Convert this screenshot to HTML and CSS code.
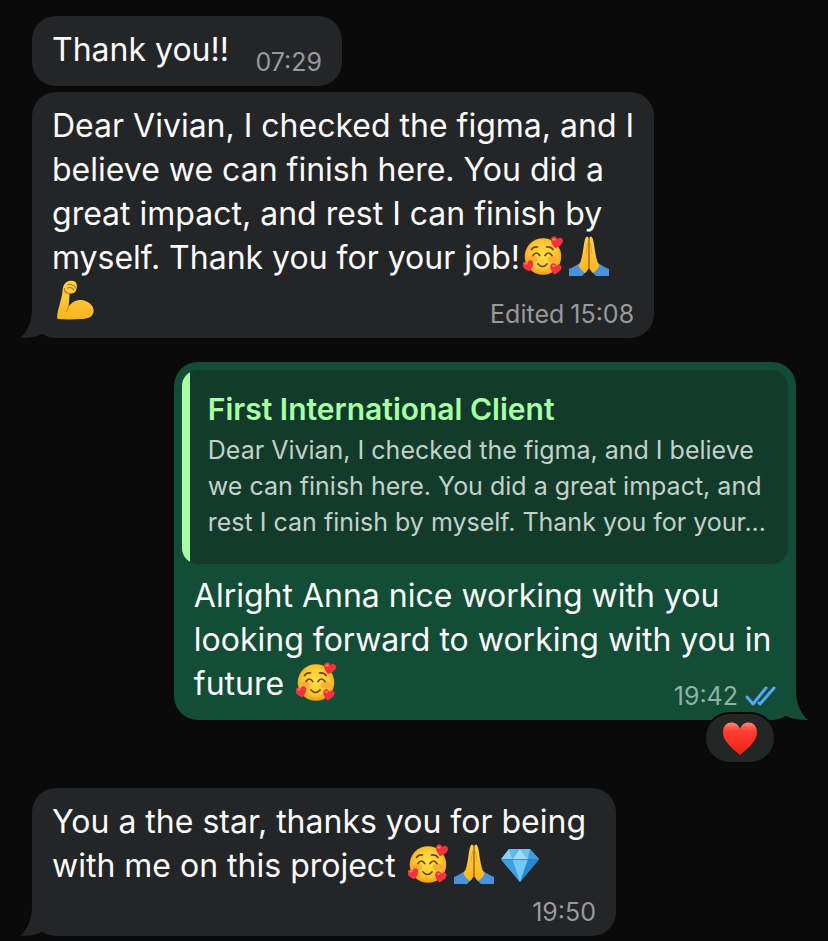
FILE: index.html
```html
<!DOCTYPE html>
<html lang="en">
<head>
    <meta charset="UTF-8">
    <meta name="viewport" content="width=device-width, initial-scale=1.0">
    <title>Chat</title>
    <link rel="stylesheet" href="styles.css">
</head>
<body>
    <!-- Shared emoji and tail shapes -->
    <svg class="sprite" aria-hidden="true">
        <defs>
            <radialGradient id="faceFill" cx="50%" cy="45%" r="55%">
                <stop offset="0" stop-color="#ffe04a"/>
                <stop offset="0.7" stop-color="#fdc631"/>
                <stop offset="1" stop-color="#ee9a1c"/>
            </radialGradient>
            <linearGradient id="skinFill" x1="0" y1="0" x2="0" y2="1">
                <stop offset="0" stop-color="#ffd24a"/>
                <stop offset="1" stop-color="#f9b51f"/>
            </linearGradient>
            <linearGradient id="heartFill" x1="0" y1="0" x2="0" y2="1">
                <stop offset="0" stop-color="#ff8a78"/>
                <stop offset="0.25" stop-color="#ff4034"/>
                <stop offset="1" stop-color="#f01f12"/>
            </linearGradient>
            <path id="heart" d="M0 6 C-3 3.600 -6 1 -6 -2 C-6 -4.500 -4.500 -5.500 -3 -5.500 C-1.500 -5.500 -.5 -4.600 0 -3.200 C.5 -4.600 1.500 -5.500 3 -5.500 C4.500 -5.500 6 -4.500 6 -2 C6 1 3 3.600 0 6 Z"/>
            <symbol id="love" viewBox="0 0 40 40">
                <circle cx="20" cy="20.500" r="18.300" fill="url(#faceFill)"/>
                <ellipse cx="9.500" cy="23" rx="5" ry="3.500" fill="#f58a35" opacity=".45"/>
                <ellipse cx="29.500" cy="23" rx="5" ry="3.500" fill="#f58a35" opacity=".45"/>
                <g fill="none" stroke="#6b400c" stroke-width="1.700" stroke-linecap="round">
                    <path d="M8.500 13.500 Q10.500 10.500 14.500 11"/>
                    <path d="M23.500 11 Q28 10.500 30 13.500"/>
                    <path d="M10 19.500 Q13.300 14.500 16.700 19.500"/>
                    <path d="M22 19.500 Q25.500 14.500 29 19.500"/>
                    <path d="M15 28 Q19.500 33 24 28"/>
                </g>
                <g fill="#f4323c">
                    <use href="#heart" transform="translate(33.500 6.500) rotate(14)"/>
                    <use href="#heart" transform="translate(5.200 30) rotate(-14) scale(.92)"/>
                    <use href="#heart" transform="translate(32.500 33) rotate(12) scale(.95)"/>
                </g>
                <g fill="#ff7f80">
                    <ellipse cx="31" cy="3.500" rx="1.800" ry="1"/>
                    <ellipse cx="3" cy="27.500" rx="1.500" ry=".9"/>
                    <ellipse cx="30.500" cy="30" rx="1.500" ry=".9"/>
                </g>
            </symbol>
            <symbol id="pray" viewBox="0 0 40 40">
                <path d="M0 33 Q5 31 11 27 L18 35 L13 40 H0 Z" fill="#4a93dc"/>
                <path d="M40 33 Q35 31 29 27 L22 35 L27 40 H40 Z" fill="#4a93dc"/>
                <path d="M18 .5 Q19.500 .5 19.900 3 V32 Q18.500 34.500 16 37 Q11 33.500 9.500 29.500 C12 26 13 21 14 15 C15 9 15.500 1 18 .5 Z" fill="url(#skinFill)"/>
                <path d="M22 .5 Q20.500 .5 20.100 3 V32 Q21.500 34.500 24 37 Q29 33.500 30.500 29.500 C28 26 27 21 26 15 C25 9 24.500 1 22 .5 Z" fill="url(#skinFill)"/>
                <path d="M20 2.500 V32" fill="none" stroke="#a8640c" stroke-width="1.300"/>
                <path d="M17 18 L18.500 7 M23 18 L21.500 7" fill="none" stroke="#e09b1c" stroke-width=".8"/>
            </symbol>
            <symbol id="muscle" viewBox="0 0 40 40">
                <path d="M2.500 39 C1.500 37 3 30 4.500 25 C6 19 7.500 14 7.500 11 C7.500 8 8.500 4.500 11 2.500 C13 .5 18 0 20.500 2 C22.500 4 22.500 10 19.500 12.500 C18 13.700 16 13.500 14.500 13.500 C14.500 18 14 23 13.500 27 C17 21.500 23 19 29 20.500 C35 22 39.500 27 38.500 32 C37.500 37 33 39 26 39 C19 39.500 10 39.500 2.500 39 Z" fill="url(#skinFill)"/>
                <path d="M14 13.500 C11 13 9 11 9.500 8.500 M13 4.500 Q16 3.500 17.500 5.500 Q20.500 5.500 20 8 M12.500 8 Q16 6.500 18.500 9.500" fill="none" stroke="#bd7414" stroke-width="1.200" stroke-linecap="round"/>
                <path d="M13.500 27 L11.500 31.500" fill="none" stroke="#d8921b" stroke-width="1.200" stroke-linecap="round"/>
            </symbol>
            <symbol id="gem" viewBox="0 0 40 40">
                <path d="M9 5 H30 L39 15 L20 38 L1 15 Z" fill="#4fb2ee"/>
                <path d="M9 5 L12.500 15.500 H1 Z" fill="#8cd0f7"/>
                <path d="M9 5 H20 L12.500 15.500 Z" fill="#5ab9f0"/>
                <path d="M20 5 L28 15.500 H12.500 Z" fill="#a5dcfb"/>
                <path d="M20 5 H30 L28 15.500 Z" fill="#6cc3f4"/>
                <path d="M30 5 L39 15.500 H28 Z" fill="#3c9ee2"/>
                <path d="M1 15.500 H12.500 L20 38 Z" fill="#3d9fe4"/>
                <path d="M12.500 15.500 H28 L20 38 Z" fill="#73c8f7"/>
                <path d="M28 15.500 H39 L20 38 Z" fill="#2c87d1"/>
                <path d="M1 15.500 H39" stroke="#2a7fc4" stroke-width=".8"/>
            </symbol>
            <symbol id="tail" viewBox="0 0 32 30">
                <path d="M12 0 C12 13 8 23 0 30 C8 30 16 29 22 26 L32 18 V0 Z"/>
            </symbol>
        </defs>
    </svg>

    <main class="chat">
        <div class="bubble incoming short">
            <p class="text">Thank you!!</p>
            <div class="meta"><time>07:29</time></div>
        </div>

        <div class="bubble incoming">
            <p class="text">Dear Vivian, I checked the figma, and I<br>believe we can finish here. You did a<br>great impact, and rest I can finish by<br>myself. Thank you for your job!<svg class="emoji"><use href="#love"/></svg><svg class="emoji"><use href="#pray"/></svg><br><svg class="emoji"><use href="#muscle"/></svg></p>
            <div class="meta overlap"><span>Edited</span><time>15:08</time></div>
            <svg class="tail"><use href="#tail"/></svg>
        </div>

        <div class="bubble outgoing">
            <blockquote class="quote">
                <p class="quote-name">First International Client</p>
                <p class="quote-text">Dear Vivian, I checked the figma, and I believe<br>we can finish here. You did a great impact, and<br>rest I can finish by myself. Thank you for your...</p>
            </blockquote>
            <p class="text">Alright Anna nice working with you<br>looking forward to working with you in<br>future <svg class="emoji"><use href="#love"/></svg></p>
            <div class="meta overlap">
                <time>19:42</time>
                <svg class="ticks" viewBox="0 0 32 22">
                    <path d="M3 12 L9 19 L22 3 M15 18 L16 19 L30 3" />
                </svg>
            </div>
            <svg class="tail"><use href="#tail"/></svg>
            <button class="reaction" type="button" aria-label="1 reaction">
                <svg viewBox="-6 -6 12 12"><use href="#heart" fill="url(#heartFill)"/></svg>
            </button>
        </div>

        <div class="bubble incoming last">
            <p class="text">You a the star, thanks you for being<br>with me on this project <svg class="emoji"><use href="#love"/></svg><svg class="emoji"><use href="#pray"/></svg><svg class="emoji"><use href="#gem"/></svg></p>
            <div class="meta"><time>19:50</time></div>
            <svg class="tail"><use href="#tail"/></svg>
        </div>
    </main>
</body>
</html>
```

FILE: styles.css
```css
* { margin: 0; padding: 0; box-sizing: border-box; }

body {
    font-family: Inter, "Liberation Sans", sans-serif;
    background: #0a0a0a;
    color: #fafafa;
}

.sprite {
    position: absolute;
    width: 0;
    height: 0;
}

.chat {
    display: flex;
    flex-direction: column;
    align-items: flex-start;
    padding: 16px 32px 5px;
}

.bubble {
    position: relative;
    display: flex;
    flex-direction: column;
    min-width: 310px;
    padding: 12px 20px;
    border-radius: 24px;
}

.incoming { background: #242527; color: #fafafa; }
.outgoing { background: #144d37; color: #fafafa; }

.incoming + .incoming { margin-top: 6px; }

.short {
    flex-direction: row;
    justify-content: space-between;
}

.outgoing {
    align-self: flex-end;
    margin: 24px 0 68px;
    padding-top: 8px;
}

.text {
    padding-bottom: 2px;
    font-size: 32px;
    line-height: 44px;
    white-space: nowrap;
}

.emoji {
    width: 40px;
    height: 40px;
    margin: 0 3px;
    vertical-align: -7px;
}

.meta {
    display: flex;
    align-self: flex-end;
    align-items: center;
    gap: 6px;
    font-size: 25px;
    line-height: 24px;
    color: #98999b;
}

.meta.overlap { margin-top: -24px; }
.outgoing .meta { color: #8db3a2; }

.last .text { padding-right: 10px; }
.last .meta { margin-top: 10px; }

.ticks {
    width: 32px;
    height: 22px;
    fill: none;
    stroke: #53a6fa;
    stroke-width: 3;
    stroke-linecap: round;
    stroke-linejoin: round;
}

.tail {
    position: absolute;
    bottom: 0;
    left: -12px;
    width: 32px;
    height: 30px;
    fill: #242527;
}

.outgoing .tail {
    left: auto;
    right: -12px;
    fill: #144d37;
    transform: scaleX(-1);
}

/* Quoted message */
.quote {
    margin: 0 -12px 10px;
    padding: 20px 22px 24px 26px;
    border-radius: 16px;
    background: linear-gradient(to right, #a9ffa5 8px, #123b2b 8px);
}

.quote-name {
    margin-bottom: 4px;
    font-size: 30px;
    font-weight: 600;
    line-height: 38px;
    color: #a9ffa5;
}

.quote-text {
    font-size: 25px;
    line-height: 36px;
    white-space: nowrap;
    color: #c3d1ca;
}

.reaction {
    position: absolute;
    right: 20px;
    bottom: -44px;
    display: flex;
    align-items: center;
    justify-content: center;
    width: 72px;
    height: 52px;
    border: 2px solid #0a0a0a;
    border-radius: 26px;
    background: #242626;
}

.reaction svg {
    width: 36px;
    height: 34px;
}
```
